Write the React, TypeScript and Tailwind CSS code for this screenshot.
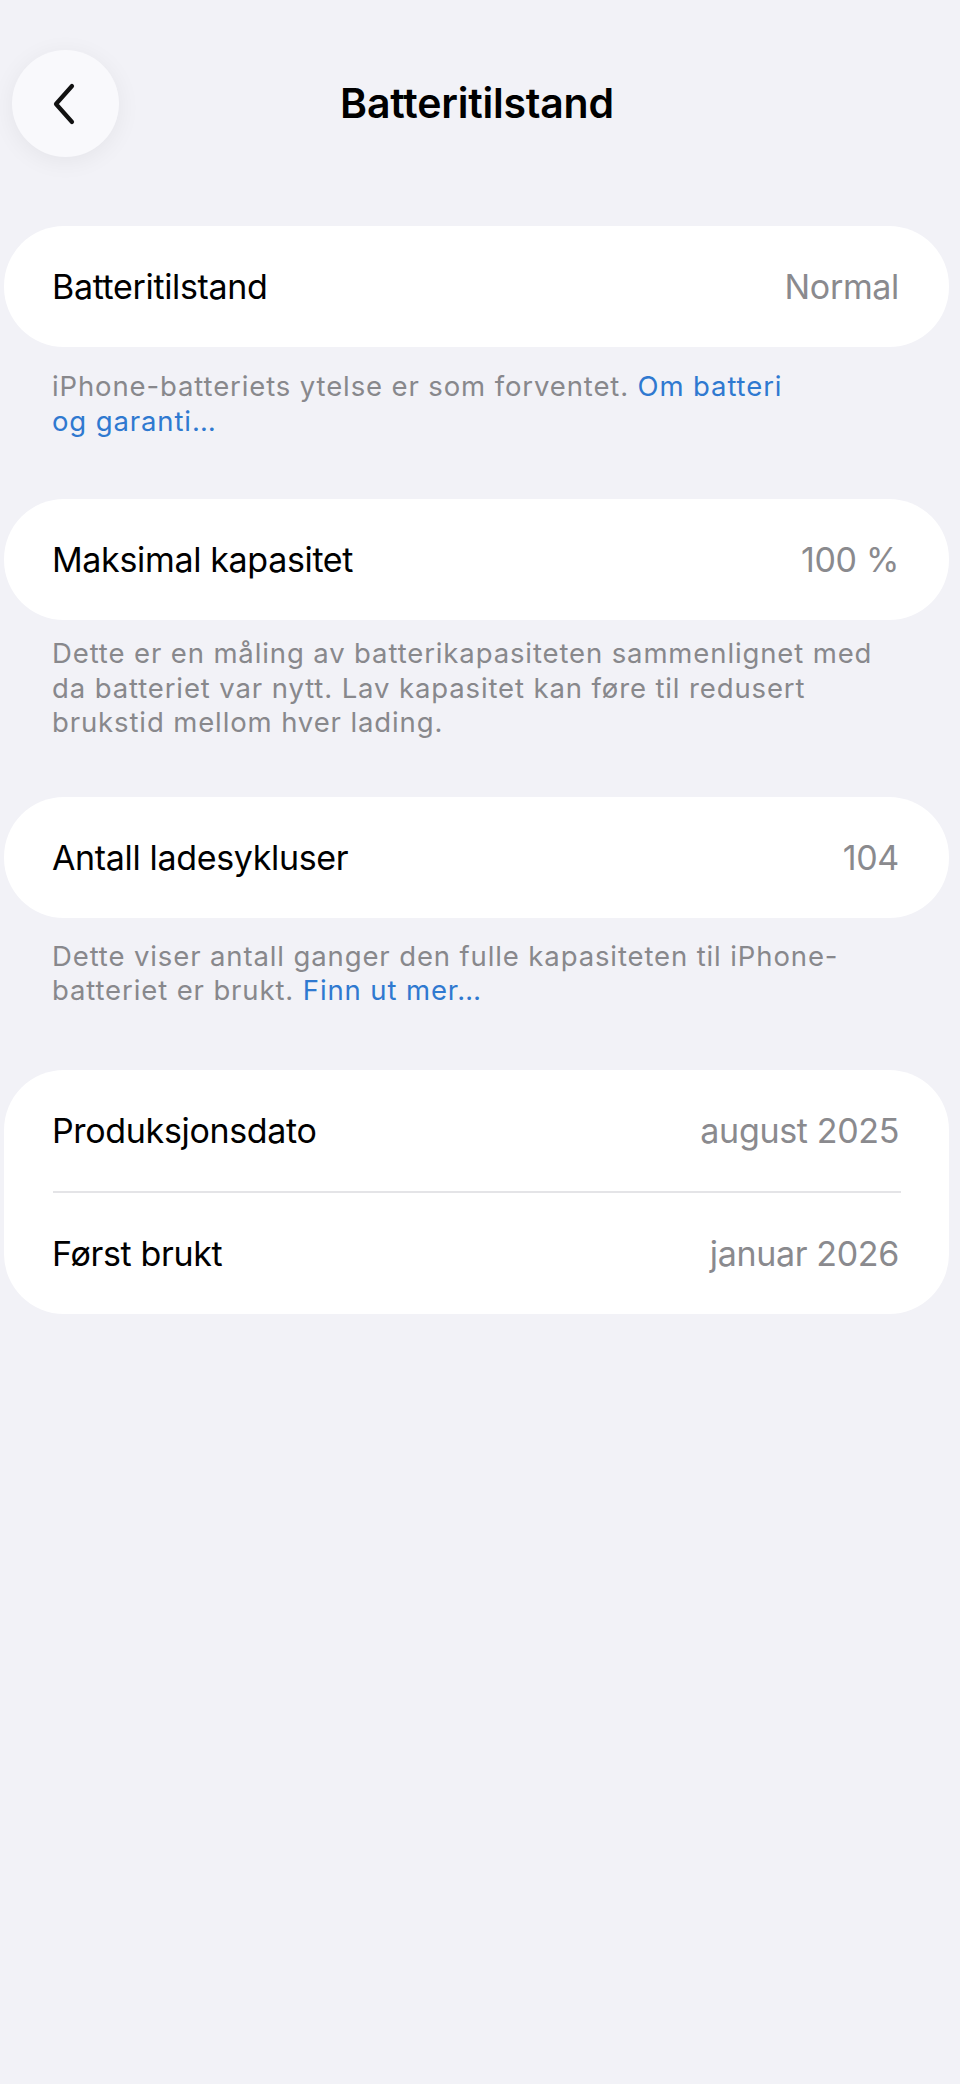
import React from "react";

function Row({ label, value }: { label: string; value: string }) {
  return (
    <div className="flex h-[121px] items-center justify-between pl-[48px] pr-[50px] text-[34px] tracking-[-0.01em]">
      <span className="text-black">{label}</span>
      <span className="text-[#8a8a8e]">{value}</span>
    </div>
  );
}

export default function App() {
  return (
    <div className="min-h-[2084px] w-[960px] bg-[#f2f2f7] font-['Inter','Liberation_Sans',sans-serif] antialiased">
      {/* Header */}
      <div className="flex items-center px-[12px] pt-[50px]">
        <button className="flex h-[107px] w-[107px] items-center justify-center rounded-full bg-[#f9f9fc] shadow-[0_4px_24px_rgba(0,0,0,0.06)]">
          <svg width="26" height="42" viewBox="0 0 26 42" fill="none" className="-ml-[4px]">
            <path d="M21 3 L5 21 L21 39" stroke="#111" strokeWidth="4.2" strokeLinecap="round" strokeLinejoin="round" />
          </svg>
        </button>
        <div className="-ml-[6px] flex-1 text-center text-[41px] font-semibold tracking-[-0.005em] text-black">Batteritilstand</div>
        <div className="w-[107px]" />
      </div>

      {/* Card 1 */}
      <div className="ml-[4px] mr-[11px] mt-[69px] rounded-[60px] bg-white">
        <Row label="Batteritilstand" value="Normal" />
      </div>
      <p className="mt-[22px] px-[52px] text-[27.5px] leading-[34.5px] tracking-[0.032em] text-[#88888c]">
        <span className="block">
          iPhone-batteriets ytelse er som forventet. <span className="text-[#2f79d0]">Om batteri</span>
        </span>
        <span className="block text-[#2f79d0]">og garanti…</span>
      </p>

      {/* Card 2 */}
      <div className="ml-[4px] mr-[11px] mt-[61px] rounded-[60px] bg-white">
        <Row label="Maksimal kapasitet" value="100 %" />
      </div>
      <p className="mt-[16px] px-[52px] text-[27.5px] leading-[34.5px] tracking-[0.032em] text-[#88888c]">
        <span className="block">Dette er en måling av batterikapasiteten sammenlignet med</span>
        <span className="block">da batteriet var nytt. Lav kapasitet kan føre til redusert</span>
        <span className="block">brukstid mellom hver lading.</span>
      </p>

      {/* Card 3 */}
      <div className="ml-[4px] mr-[11px] mt-[57px] rounded-[60px] bg-white">
        <Row label="Antall ladesykluser" value="104" />
      </div>
      <p className="mt-[21px] px-[52px] text-[27.5px] leading-[34.5px] tracking-[0.032em] text-[#88888c]">
        <span className="block">Dette viser antall ganger den fulle kapasiteten til iPhone-</span>
        <span className="block">
          batteriet er brukt. <span className="text-[#2f79d0]">Finn ut mer…</span>
        </span>
      </p>

      {/* Card 4 */}
      <div className="ml-[4px] mr-[11px] mt-[62px] rounded-[60px] bg-white">
        <Row label="Produksjonsdato" value="august 2025" />
        <div className="ml-[49px] mr-[48px] h-[2px] bg-[#e4e4e7]" />
        <Row label="Først brukt" value="januar 2026" />
      </div>
    </div>
  );
}
